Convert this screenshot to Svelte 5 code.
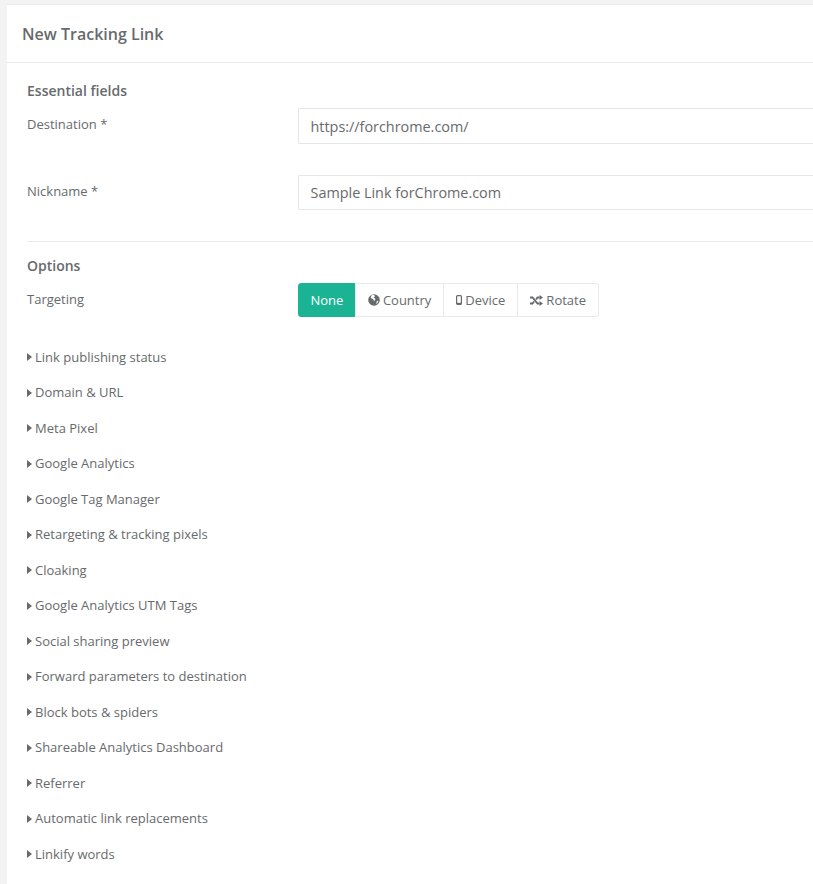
<script>
  const panels = [
    'Link publishing status',
    'Domain & URL',
    'Meta Pixel',
    'Google Analytics',
    'Google Tag Manager',
    'Retargeting & tracking pixels',
    'Cloaking',
    'Google Analytics UTM Tags',
    'Social sharing preview',
    'Forward parameters to destination',
    'Block bots & spiders',
    'Shareable Analytics Dashboard',
    'Referrer',
    'Automatic link replacements',
    'Linkify words'
  ];
</script>

<div class="page">
  <div class="card">
    <div class="card-head">New Tracking Link</div>
    <div class="card-body">
      <h4 class="first">Essential fields</h4>
      <div class="row dest">
        <span class="lbl">Destination *</span>
        <input class="field tall" type="text" value="https://forchrome.com/" />
      </div>
      <div class="row nick">
        <span class="lbl">Nickname *</span>
        <input class="field" type="text" value="Sample Link forChrome.com" />
      </div>
      <hr />
      <h4>Options</h4>
      <div class="row target">
        <span class="lbl">Targeting</span>
        <div class="btns">
          <button class="on">None</button>
          <button>
            <svg width="12" height="12" viewBox="0 0 12 12"><circle cx="6" cy="6" r="5.8" fill="#676a6c" /><path d="M3.500 1.200l2.500-.4 1 1.400-1.200 1.300 1.700 1.600-1.300 2.200-1.200-2.300-2.300-1zM8.800 7.200l1.600-.6-.7 2.200-1.500 1.300z" fill="#fff" /></svg>
            Country
          </button>
          <button>
            <svg width="6" height="10" viewBox="0 0 6 10"><rect x=".6" y=".6" width="4.800" height="8.800" rx="1" fill="none" stroke="#676a6c" stroke-width="1.200" /><rect x="1" y="7.800" width="4" height="1.800" fill="#676a6c" /></svg>
            Device
          </button>
          <button>
            <svg width="13" height="11" viewBox="0 0 13 11"><path d="M0 2.500h2.500l5 6h2M0 8.500h2.500l1.500-2M6 4.500l1.500-2h2" fill="none" stroke="#676a6c" stroke-width="1.800" /><path d="M9.500 0l3.500 2.500-3.500 2.500zM9.500 6l3.500 2.500-3.500 2.500z" fill="#676a6c" /></svg>
            Rotate
          </button>
        </div>
      </div>
      <ul>
        {#each panels as p}
          <li><i></i>{p}</li>
        {/each}
      </ul>
    </div>
  </div>
</div>

<style>
  :global(body) {
    background: #f3f3f4;
    overflow: hidden;
  }
  .page {
    height: 884px;
    padding: 4px 0 0 7px;
    box-sizing: border-box;
    overflow: hidden;
    font-family: "Open Sans", sans-serif;
    font-size: 13px;
    color: #676a6c;
  }
  .card {
    background: #fff;
    border-top: 1px solid #e7eaec;
    height: 100%;
    width: 830px;
  }
  .card-head {
    height: 57px;
    line-height: 59px;
    padding-left: 15px;
    font-size: 16px;
    font-weight: 600;
    border-bottom: 1px solid #e7eaec;
  }
  .card-body {
    padding: 0 0 0 20px;
  }
  h4 {
    margin: 0;
    font-size: 14px;
    font-weight: 600;
    line-height: 19px;
  }
  h4.first {
    padding-top: 18px;
  }
  .row {
    display: grid;
    grid-template-columns: 271px 1fr;
  }
  .lbl {
    line-height: 18px;
    padding-top: 7px;
  }
  .dest {
    margin-top: 8px;
  }
  .nick {
    margin-top: 31px;
  }
  .field {
    box-sizing: border-box;
    width: 100%;
    height: 35px;
    padding: 0 11.5px;
    border: 1px solid #e5e6e7;
    border-radius: 1px;
    font: inherit;
    font-size: 14.4px;
    color: #676a6c;
    outline: none;
  }
  .tall {
    height: 36px;
  }
  hr {
    border: 0;
    border-top: 1px solid #e7eaec;
    margin: 31px 0 14px;
  }
  .target {
    margin-top: 8px;
  }
  .btns {
    display: flex;
  }
  button {
    height: 34px;
    padding: 0 12px;
    margin-left: -1px;
    background: #fff;
    border: 1px solid #e7eaec;
    font: inherit;
    font-size: 13px;
    color: #676a6c;
    display: flex;
    align-items: center;
    gap: 3px;
  }
  button:last-child {
    border-radius: 0 3px 3px 0;
  }
  button.on {
    margin-left: 0;
    padding: 0 11.5px;
    background: #1ab394;
    border-color: #1ab394;
    color: #fff;
    border-radius: 3px 0 0 3px;
  }
  ul {
    list-style: none;
    margin: 22.7px 0 0;
    padding: 0;
  }
  li {
    height: 35.5px;
    line-height: 35.5px;
    display: flex;
    align-items: center;
  }
  li i {
    width: 0;
    height: 0;
    border-left: 5px solid #676a6c;
    border-top: 4.5px solid transparent;
    border-bottom: 4.5px solid transparent;
    margin-right: 3px;
  }
</style>
